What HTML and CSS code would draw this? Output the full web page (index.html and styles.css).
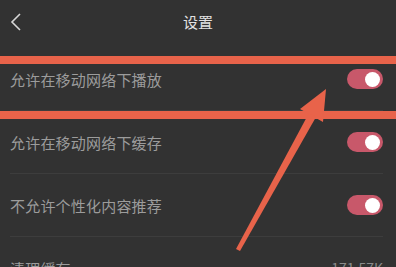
FILE: index.html
```html
<!DOCTYPE html>
<html lang="zh-CN">
  <head>
    <meta charset="UTF-8" />
    <meta name="viewport" content="width=device-width, initial-scale=1.0" />
    <title>设置</title>
    <link rel="stylesheet" href="styles.css">
  </head>
  <body>
    <div class="page">
      <div class="header">
        <svg class="back" width="14" height="20" viewBox="0 0 14 20">
          <polyline points="11,2 3,10 11,18" fill="none" stroke="#d8d8d8" stroke-width="1.6" />
        </svg>
        <span class="title">设置</span>
      </div>

      <div class="row">
        <span class="label">允许在移动网络下播放</span>
        <span class="switch on"></span>
      </div>
      <div class="row">
        <span class="label">允许在移动网络下缓存</span>
        <span class="switch on"></span>
      </div>
      <div class="row">
        <span class="label">不允许个性化内容推荐</span>
        <span class="switch on"></span>
      </div>
      <div class="row">
        <span class="label">清理缓存</span>
        <span class="value">171.57K</span>
      </div>

      <!-- 标注 -->
      <div class="mark mark-top"></div>
      <div class="mark mark-bottom"></div>
      <svg class="arrow" width="396" height="267" viewBox="0 0 396 267">
        <polygon points="326,89 300,109 323,122" fill="#e8634a" />
        <polygon points="309,113 316,117 240,251 236,249" fill="#e8634a" />
      </svg>
    </div>
  </body>
</html>
```

FILE: styles.css
```css
body {
  margin: 0;
  font-family: 'Noto Sans CJK SC', 'Noto Sans', sans-serif;
  background: #323232;
}
.page {
  position: relative;
  width: 396px;
  height: 267px;
  overflow: hidden;
  background: #323232;
}
.header {
  position: relative;
  height: 48px;
  display: flex;
  align-items: flex-start;
  justify-content: center;
}
.back {
  position: absolute;
  left: 9px;
  top: 12px;
}
.title {
  line-height: 44px;
  font-size: 15px;
  color: #e2e2e2;
}
.row {
  height: 63px;
  margin: 0 13px 0 10px;
  display: flex;
  align-items: center;
  justify-content: space-between;
  border-bottom: 1px solid #3d3d3d;
  box-sizing: border-box;
}
.label {
  font-size: 15px;
  color: #9c9c9c;
  letter-spacing: 0.2px;
}
.value {
  font-size: 14px;
  color: #8a8a8a;
}
.switch {
  position: relative;
  width: 36px;
  height: 20px;
  border-radius: 10px;
  background: #c8586a;
}
.switch.on::after {
  content: '';
  position: absolute;
  right: 3px;
  top: 2.5px;
  width: 15px;
  height: 15px;
  border-radius: 50%;
  background: #fff;
}
.mark {
  position: absolute;
  left: 0;
  width: 396px;
  background: #e8634a;
}
.mark-top {
  top: 56px;
  height: 8px;
}
.mark-bottom {
  top: 111px;
  height: 8px;
}
.arrow {
  position: absolute;
  left: 0;
  top: 0;
}
```
